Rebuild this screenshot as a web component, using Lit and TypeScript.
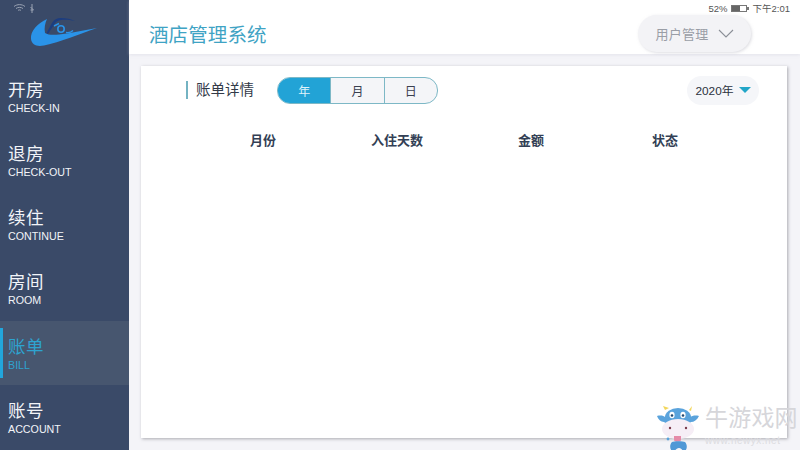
import { LitElement, html, css, svg } from "lit";
import { customElement } from "lit/decorators.js";

const NAV = [
  ["开房", "CHECK-IN"],
  ["退房", "CHECK-OUT"],
  ["续住", "CONTINUE"],
  ["房间", "ROOM"],
  ["账单", "BILL"],
  ["账号", "ACCOUNT"],
];

const logo = svg`<svg class="logo" width="68" height="30" viewBox="0 0 68 30">
  <path d="M17 2C8 6 0 14 1 22c.8 6 6 8 13 6.500C30 25 50 17 67 11c-13 2-25 5-38 6.500-6 .7-11 .5-14-1.500C14 11 15 6 17 2Z" fill="#2a93e8"/>
  <path d="M16.500 16 22 6c2-3.500 5-5 9-5 5 0 10 1 14 3-5-1-9-1.500-14-1-3 .3-5 1.500-6.500 4L18 17Z" fill="#1c3d80"/>
  <circle cx="31" cy="12" r="3.200" fill="none" stroke="#2a93e8" stroke-width="1.600"/>
  <path d="M24 9l5-2.500" stroke="#2a93e8" stroke-width="1.400"/>
  <path d="M36 15.500c3 .5 5 0 7-2" stroke="#2a93e8" stroke-width="1.400" fill="none"/>
</svg>`;

const cow = svg`<svg class="cow" width="44" height="50" viewBox="0 0 44 50">
  <path d="M9 6l-2-4 6 2ZM33 6l3-4-1 5Z" fill="#f2d65a"/>
  <path d="M1 12c4-1 7 0 8 1 4-5 20-6 25 0 2-1 5-2 9-1-2 4-5 6-8 6-2 3-24 3-27 0-3 0-6-3-7-6Z" fill="#5aa3dc"/>
  <ellipse cx="22" cy="13" rx="13" ry="9" fill="#5aa3dc"/>
  <ellipse cx="16" cy="11" rx="2.600" ry="3.200" fill="#fff"/>
  <ellipse cx="27" cy="11" rx="2.600" ry="3.200" fill="#fff"/>
  <circle cx="16" cy="11.500" r="1.300" fill="#24486e"/>
  <circle cx="27" cy="11.500" r="1.300" fill="#24486e"/>
  <ellipse cx="22" cy="25" rx="16" ry="10" fill="#f6eef6"/>
  <circle cx="14" cy="24" r="1.200" fill="#7a3a4a"/>
  <circle cx="30" cy="24" r="1.200" fill="#7a3a4a"/>
  <path d="M18 32h7v4c0 2-7 2-7 0Z" fill="#e58aa8"/>
  <path d="M16 38c2-1 11-1 13 0 3 3 2 9-1 9-2 0-2-3-5-3s-3 3-6 3c-3 0-4-6-1-9Z" fill="#4f98d6"/>
  <circle cx="12" cy="35" r="1.400" fill="#5aa3dc"/>
</svg>`;

@customElement("app-root")
export class AppRoot extends LitElement {
  static styles = css`
    :host {
      display: block;
      width: 800px;
      height: 450px;
      overflow: hidden;
      position: relative;
      font-family: "Liberation Sans", "Noto Sans CJK SC", sans-serif;
      background: #f4f4f8;
    }
    .app { display: flex; height: 450px; }
    .side {
      width: 129px;
      flex: none;
      background: #3a4a68;
      display: flex;
      flex-direction: column;
    }
    .logo-box { height: 64px; flex: none; padding: 17px 0 0 30px; box-sizing: border-box; }
    .logo { display: block; }
    .item {
      height: 64.300px;
      flex: none;
      box-sizing: border-box;
      padding: 15.500px 0 0 8px;
      color: #f2f4f8;
      position: relative;
    }
    .item .zh { font-size: 17.500px; line-height: 20px; letter-spacing: 0.500px; }
    .item .en { font-size: 10.700px; line-height: 13px; margin-top: 2px; }
    .item.active { background: #47566f; color: #2ea3d0; }
    .item.active::before {
      content: "";
      position: absolute;
      left: 0; top: 7px; bottom: 7px;
      width: 2.500px;
      background: #22a6dc;
    }
    .main { flex: 1; display: flex; flex-direction: column; min-width: 0; }
    .top {
      height: 54px;
      flex: none;
      background: #fff;
      display: flex;
      align-items: center;
      justify-content: space-between;
      padding: 12px 49px 0 20px;
      box-sizing: border-box;
      box-shadow: 0 1px 3px rgba(200, 200, 215, 0.35);
    }
    .title { font-size: 19.500px; color: #3fa3c4; letter-spacing: 0.100px; }
    .user {
      width: 113px;
      height: 37px;
      border-radius: 19px;
      background: #f3f3f6;
      box-shadow: 1px 1px 3px rgba(190, 190, 200, 0.5);
      display: flex;
      align-items: center;
      justify-content: center;
      gap: 9px;
      color: #9a9ea6;
      font-size: 13px;
      letter-spacing: 0.300px;
    }
    .wrap { flex: 1; padding: 12px 13px 12px 12px; min-height: 0; display: flex; }
    .card {
      flex: 1;
      background: #fff;
      box-shadow: 1px 1px 3px rgba(120, 120, 130, 0.6);
      padding: 11px 28px 0 45px;
      box-sizing: border-box;
    }
    .bar { display: flex; align-items: center; height: 26px; }
    .head {
      border-left: 2px solid #74b3c2;
      height: 18px;
      line-height: 18px;
      padding-left: 8px;
      font-size: 14.500px;
      color: #333a48;
      margin-right: 23px;
    }
    .seg {
      display: flex;
      width: 161px;
      height: 27px;
      box-sizing: border-box;
      border: 1.500px solid #7db8c6;
      border-radius: 13px;
      overflow: hidden;
      background: #f4f5f8;
    }
    .seg div {
      flex: 1;
      display: flex;
      align-items: center;
      justify-content: center;
      font-size: 12px;
      color: #3a4050;
    }
    .seg div + div { border-left: 1px solid #7db8c6; }
    .seg .on { background: #22a3d6; color: #dff2fa; border-left: 0; }
    .year {
      margin-left: auto;
      width: 72px;
      height: 29px;
      border-radius: 15px;
      background: #f5f6f9;
      display: flex;
      align-items: center;
      justify-content: center;
      gap: 5px;
      padding-bottom: 1px;
      box-sizing: border-box;
      font-size: 11.800px;
      color: #2c3340;
    }
    .tri {
      width: 0; height: 0;
      border-left: 6px solid transparent;
      border-right: 6px solid transparent;
      border-top: 6px solid #22a6c8;
    }
    .cols {
      display: grid;
      grid-template-columns: repeat(4, 134px);
      margin: 29px 0 0 10px;
      font-size: 13px;
      font-weight: 700;
      color: #333f55;
      line-height: 18px;
      justify-items: center;
      width: 536px;
    }
    .status {
      position: absolute;
      right: 10px;
      top: 3px;
      display: flex;
      align-items: center;
      gap: 3px;
      font-size: 9.500px;
      line-height: 11px;
      color: #555;
    }
    .batt { display: block; }
    .wifi { position: absolute; left: 14px; top: 4px; display: block; }
    .mark {
      position: absolute;
      left: 656px;
      top: 404px;
      display: flex;
      align-items: flex-start;
    }
    .cow { display: block; }
    .mark-text { margin-left: 5px; margin-top: 1px; }
    .mark-zh { font-size: 23px; line-height: 27px; color: #d6d6da; letter-spacing: 0.200px; white-space: nowrap; }
    .mark-en { font-size: 10px; line-height: 11px; margin-top: 3px; color: #dcdce0; letter-spacing: 0.500px; }
  `;

  render() {
    return html`
      <div class="app">
        <nav class="side">
          <div class="logo-box">${logo}</div>
          ${NAV.map(
            ([zh, en]) => html`<div class="item ${en === "BILL" ? "active" : ""}">
              <div class="zh">${zh}</div>
              <div class="en">${en}</div>
            </div>`
          )}
        </nav>
        <div class="main">
          <header class="top">
            <div class="title">酒店管理系统</div>
            <div class="user">
              用户管理
              <svg width="16" height="9" viewBox="0 0 16 9"><path d="M1 1l7 7 7-7" fill="none" stroke="#8b8f97" stroke-width="1.100"/></svg>
            </div>
          </header>
          <div class="wrap">
            <section class="card">
              <div class="bar">
                <div class="head">账单详情</div>
                <div class="seg"><div class="on">年</div><div>月</div><div>日</div></div>
                <div class="year">2020年<span class="tri"></span></div>
              </div>
              <div class="cols"><div>月份</div><div>入住天数</div><div>金额</div><div>状态</div></div>
            </section>
          </div>
        </div>
      </div>
      <svg class="wifi" width="22" height="9" viewBox="0 0 22 9">
        <path d="M0 2.500c3-2.500 8-2.500 11 0M2 4.500c2-1.500 5-1.500 7 0M4 6.500c1-.8 2-.8 3 0" fill="none" stroke="#9aa3b3" stroke-width="1"/>
        <path d="M18 0v9M16.500 3l3 3-3 0" fill="none" stroke="#9aa3b3" stroke-width="1"/>
      </svg>
      <div class="status">
        <span>52%</span>
        <svg class="batt" width="19" height="7" viewBox="0 0 19 7"><rect x=".5" y=".5" width="15" height="6" fill="none" stroke="#777"/><rect x="1" y="1" width="8" height="5" fill="#666"/><rect x="16" y="2" width="2" height="3" fill="#777"/></svg>
        <span>下午2:01</span>
      </div>
      <div class="mark">
        ${cow}
        <div class="mark-text">
          <div class="mark-zh">牛游戏网</div>
          <div class="mark-en">www.newyx.net</div>
        </div>
      </div>
    `;
  }
}
